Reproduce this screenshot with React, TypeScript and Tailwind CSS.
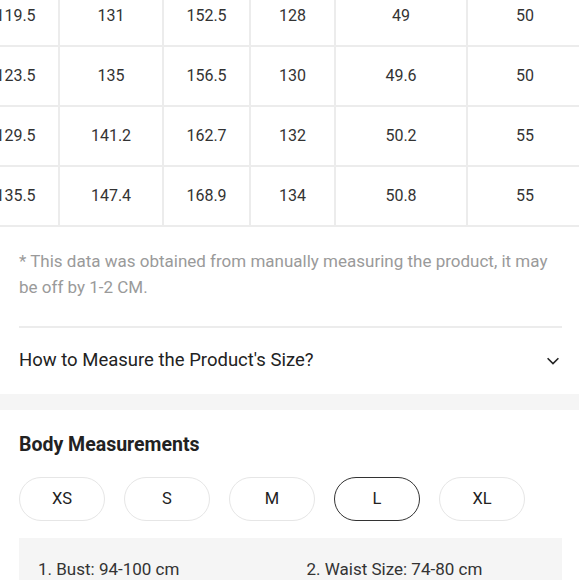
const rows = [
  ["119.5", "131", "152.5", "128", "49", "50"],
  ["123.5", "135", "156.5", "130", "49.6", "50"],
  ["129.5", "141.2", "162.7", "132", "50.2", "55"],
  ["135.5", "147.4", "168.9", "134", "50.8", "55"],
];

// column widths, the table is scrolled a bit to the left
const colWidths = ["w-[87px]", "w-[104px]", "w-[87px]", "w-[85px]", "w-[132px]", "w-[114px]"];

const sizes = ["XS", "S", "M", "L", "XL"];

function Chevron() {
  return (
    <svg width="14" height="14" viewBox="0 0 14 14" fill="none" className="text-[#222]">
      <path d="M1.6 4.3L7 9.6L12.4 4.3" stroke="currentColor" strokeWidth="1.6" />
    </svg>
  );
}

export default function App() {
  return (
    <div className="w-[579px] h-[580px] overflow-hidden bg-white font-['Roboto',sans-serif] text-[#222]">
      {/* size table */}
      <div className="overflow-hidden">
        <div className="-mt-[13px] -ml-[27px] w-[610px]">
          {rows.map((row, i) => (
            <div key={i} className="flex h-[60px] border-b-2 border-[#ececec]">
              {row.map((cell, j) => (
                <div
                  key={j}
                  className={`${colWidths[j]} shrink-0 flex items-center justify-center text-[16px] text-[#333] ${j < 5 ? "border-r-2 border-[#ececec]" : ""}`}
                >
                  {cell}
                </div>
              ))}
            </div>
          ))}
        </div>
      </div>

      <p className="px-[19px] pt-[21px] text-[17px] leading-[26px] text-[#9a9a9a]">
        * This data was obtained from manually measuring the product, it may be off by 1-2 CM.
      </p>

      <div className="ml-[19px] mr-[17px] mt-[26px] border-t-2 border-[#ececec] h-[68px] flex items-center justify-between pr-[2px]">
        <span className="text-[18.5px]">How to Measure the Product's Size?</span>
        <Chevron />
      </div>

      <div className="h-[16px] bg-[#f5f5f5]" />

      <div className="px-[19px] pt-[23px]">
        <h2 className="text-[19.5px] leading-[24px] font-bold">Body Measurements</h2>

        <div className="mt-[20px] flex gap-[19px]">
          {sizes.map((s) => (
            <button
              key={s}
              className={`w-[86px] h-[44px] rounded-full text-[16.5px] flex items-center justify-center ${s === "L" ? "border-[1.5px] border-[#333]" : "border border-[#e6e6e6]"}`}
            >
              {s}
            </button>
          ))}
        </div>

        <div className="mt-[17px] mr-[-2px] bg-[#f5f5f5] pt-[19px] pb-[16px] px-[19px] grid grid-cols-2 text-[17px] leading-[24px] text-[#333]">
          <span>1. Bust: 94-100 cm</span>
          <span className="pl-[16px]">2. Waist Size: 74-80 cm</span>
        </div>
      </div>
    </div>
  );
}
